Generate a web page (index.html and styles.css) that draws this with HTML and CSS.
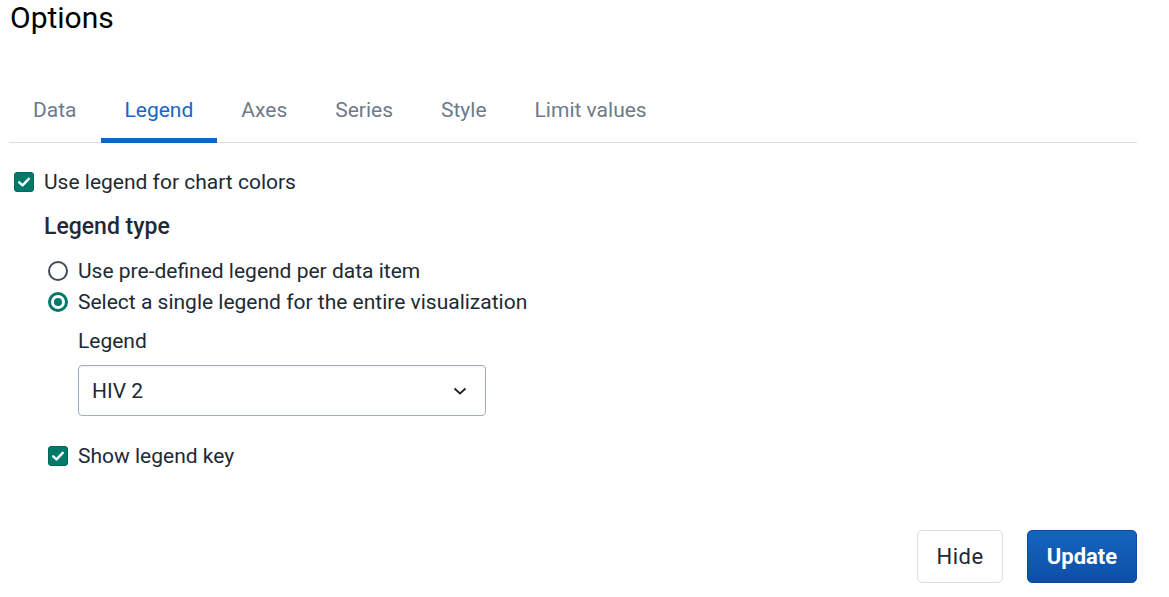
FILE: index.html
```html
<!DOCTYPE html>
<html lang="en">
<head>
<meta charset="utf-8">
<title>Options</title>
<link rel="stylesheet" href="styles.css">
</head>
<body>
<div class="page">
  <h1 class="title">Options</h1>
  <nav class="tabs">
    <div class="tab">Data</div>
    <div class="tab active">Legend</div>
    <div class="tab">Axes</div>
    <div class="tab">Series</div>
    <div class="tab">Style</div>
    <div class="tab">Limit values</div>
  </nav>
  <div class="content">
    <label class="check-row top-check">
      <span class="checkbox checked"><svg viewBox="0 0 20 20" width="20" height="20"><path d="M5.2 10.3 L8.5 13.4 L14.8 6.8" fill="none" stroke="#fff" stroke-width="2.4" stroke-linecap="round" stroke-linejoin="round"/></svg></span>
      <span class="label">Use legend for chart colors</span>
    </label>
    <div class="section">
      <div class="section-title">Legend type</div>
      <div class="radios">
        <label class="radio-row"><span class="radio"></span><span class="label">Use pre-defined legend per data item</span></label>
        <label class="radio-row"><span class="radio selected"></span><span class="label">Select a single legend for the entire visualization</span></label>
      </div>
      <div class="field">
        <div class="field-label">Legend</div>
        <div class="select">
          <span class="select-value">HIV 2</span>
          <svg class="chev" viewBox="0 0 14 8" width="14" height="8"><path d="M1.5 1.5 L7 6.5 L12.5 1.5" fill="none" stroke="#222" stroke-width="1.8"/></svg>
        </div>
      </div>
      <label class="check-row key-check">
        <span class="checkbox checked"><svg viewBox="0 0 20 20" width="20" height="20"><path d="M5.2 10.3 L8.5 13.4 L14.8 6.8" fill="none" stroke="#fff" stroke-width="2.4" stroke-linecap="round" stroke-linejoin="round"/></svg></span>
        <span class="label">Show legend key</span>
      </label>
    </div>
  </div>
  <div class="actions">
    <button class="btn secondary">Hide</button>
    <button class="btn primary">Update</button>
  </div>
</div>
</body>
</html>
```
FILE: styles.css
```css
* { box-sizing: border-box; }
html, body { margin: 0; padding: 0; background: #fff; }
body { font-family: Roboto, "Liberation Sans", sans-serif; color: #212934; }
.page { width: 1169px; height: 597px; padding: 0 32px 0 9px; display: flex; flex-direction: column; }
.title { margin: 0; padding: 0 0 0 1px; font-size: 30px; font-weight: 400; line-height: 36px; color: #000; }
.tabs { margin-top: 54px; display: flex; padding-left: 0; border-bottom: 1px solid #d5dde5; height: 53px; }
.tab { padding: 0 24px; font-size: 21px; line-height: 40px; color: #6e7a8a; height: 53px; border-bottom: 5px solid transparent; margin-bottom: -1px; }
.tab.active { color: #1765c6; border-bottom-color: #1565c0; }
.content { padding-left: 5px; padding-top: 27px; }
.check-row { display: flex; align-items: center; gap: 10px; font-size: 21px; line-height: 24px; }
.checkbox { width: 20px; height: 20px; border-radius: 3px; display: inline-flex; flex: none; }
.checkbox.checked { background: #00796b; border: 1px solid #00695c; }
.checkbox svg { margin: -1px; }
.section { padding-left: 30px; padding-top: 19px; }
.section-title { font-size: 23px; font-weight: 500; line-height: 28px; color: #212934; }
.radios { margin-top: 18px; display: flex; flex-direction: column; gap: 7px; }
.radio-row { display: flex; align-items: center; gap: 10px; font-size: 21px; line-height: 24px; padding-left: 4px; }
.radio { width: 20px; height: 20px; border-radius: 50%; border: 2px solid #404b5a; flex: none; position: relative; }
.radio.selected { border: 3px solid #00796b; }
.radio.selected::after { content: ""; position: absolute; left: 3px; top: 3px; width: 8px; height: 8px; border-radius: 50%; background: #00796b; }
.field { padding-left: 34px; margin-top: 13px; }
.field-label { font-size: 21px; line-height: 28px; color: #212934; }
.select { margin-top: 10px; width: 408px; height: 51px; border: 1px solid #a0adba; border-radius: 4px; display: flex; align-items: center; justify-content: space-between; padding: 0 18px 0 13px; box-shadow: inset 0 1px 2px rgba(0,0,0,0.06); }
.select-value { font-size: 21px; color: #212934; }
.chev { display: block; }
.key-check { padding-left: 4px; margin-top: 28px; }
.actions { margin-top: auto; margin-bottom: 14px; display: flex; justify-content: flex-end; gap: 24px; }
.btn { height: 53px; font-family: Roboto, "Liberation Sans", sans-serif; font-size: 22px; border-radius: 5px; cursor: pointer; }
.btn.secondary { width: 86px; background: #fff; border: 1px solid #d5dde5; color: #212934; letter-spacing: 0.5px; }
.btn.primary { width: 110px; border: 1px solid #0d47a1; background: linear-gradient(180deg, #1565c0 0%, #0d4ea6 100%); color: #fff; font-weight: 700; }
```
